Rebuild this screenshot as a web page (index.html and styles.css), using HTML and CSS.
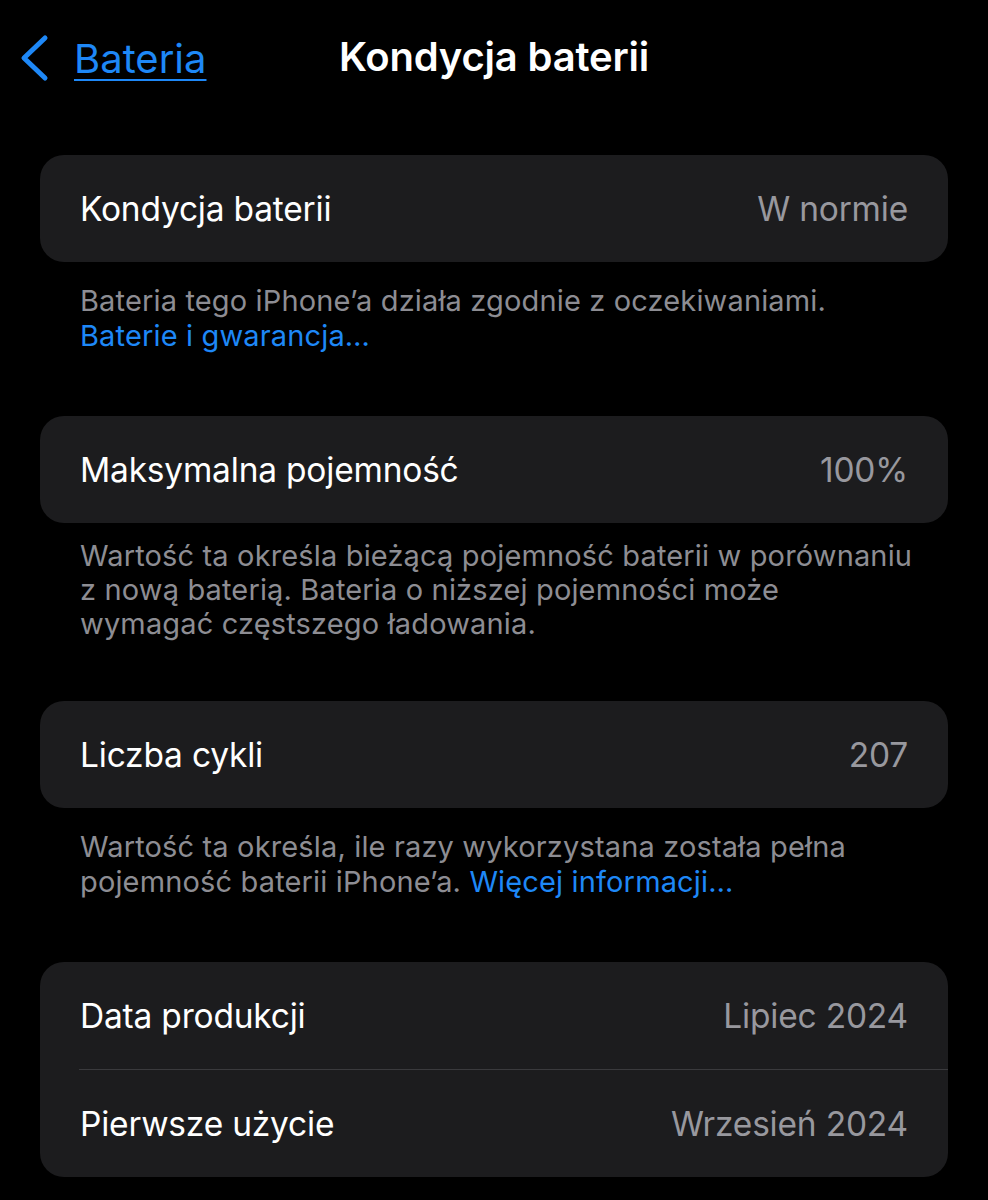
FILE: index.html
```html
<!DOCTYPE html>
<html lang="pl">
<head>
<meta charset="utf-8">
<title>Kondycja baterii</title>
<link rel="stylesheet" href="styles.css">
</head>
<body>
<div class="screen">
  <header class="nav">
    <a class="back" href="#">
      <svg class="chev" width="30" height="48" viewBox="0 0 30 48" aria-hidden="true">
        <polyline points="25,4 4,24 25,44" fill="none" stroke="currentColor" stroke-width="5" stroke-linecap="round" stroke-linejoin="round"/>
      </svg>
      <span class="back-label">Bateria</span>
    </a>
    <h1 class="title">Kondycja baterii</h1>
    <div class="nav-spacer"></div>
  </header>

  <main class="list">
    <section class="group">
      <div class="card">
        <div class="row"><span class="label">Kondycja baterii</span><span class="value">W normie</span></div>
      </div>
      <p class="footer">Bateria tego iPhone’a działa zgodnie z oczekiwaniami.<br><a class="link" href="#">Baterie i gwarancja…</a></p>
    </section>

    <section class="group">
      <div class="card">
        <div class="row"><span class="label">Maksymalna pojemność</span><span class="value">100%</span></div>
      </div>
      <p class="footer footer-tight">Wartość ta określa bieżącą pojemność baterii w porównaniu<br>z nową baterią. Bateria o niższej pojemności może<br>wymagać częstszego ładowania.</p>
    </section>

    <section class="group">
      <div class="card">
        <div class="row"><span class="label">Liczba cykli</span><span class="value">207</span></div>
      </div>
      <p class="footer">Wartość ta określa, ile razy wykorzystana została pełna<br>pojemność baterii iPhone’a. <a class="link" href="#">Więcej informacji…</a></p>
    </section>

    <section class="group">
      <div class="card">
        <div class="row"><span class="label">Data produkcji</span><span class="value">Lipiec 2024</span></div>
        <div class="divider"></div>
        <div class="row"><span class="label">Pierwsze użycie</span><span class="value">Wrzesień 2024</span></div>
      </div>
    </section>
  </main>
</div>
</body>
</html>
```

FILE: styles.css
```css
html, body {
  margin: 0;
  padding: 0;
  background: #000;
}

body {
  font-family: Inter, "Noto Sans", "Liberation Sans", sans-serif;
  color: #fff;
  -webkit-font-smoothing: antialiased;
}

.screen {
  width: 988px;
  min-height: 1200px;
  background: #000;
}

.nav {
  height: 116px;
  display: grid;
  grid-template-columns: 1fr auto 1fr;
  align-items: center;
}

.back {
  display: flex;
  align-items: center;
  gap: 24px;
  padding-left: 20px;
  color: #1e88f7;
  text-decoration: none;
  justify-self: start;
}

.chev {
  display: block;
}

.back-label {
  font-size: 40px;
  letter-spacing: 0;
  text-decoration: underline;
  text-decoration-thickness: 2px;
  text-underline-offset: 6px;
}

.title {
  margin: 0 0 4px 0;
  font-size: 40px;
  font-weight: 600;
  letter-spacing: -0.2px;
  color: #fff;
}

.list {
  padding: 39px 40px 0 40px;
}

.card {
  background: #1c1c1e;
  border-radius: 24px;
  overflow: hidden;
}

.row {
  height: 107px;
  display: flex;
  align-items: center;
  justify-content: space-between;
  padding: 0 40px;
  font-size: 33.5px;
  letter-spacing: -0.2px;
}

.label {
  color: #fff;
}

.value {
  color: #98989e;
}

.divider {
  height: 1px;
  background: #3a3a3d;
  margin-left: 39px;
}

.footer {
  margin: 0;
  padding: 21px 40px 63px 40px;
  font-size: 29px;
  line-height: 35px;
  letter-spacing: 0.15px;
  color: #8d8d93;
  white-space: nowrap;
}

.footer-tight {
  padding-top: 16px;
  line-height: 34px;
  padding-bottom: 60px;
}

.link {
  color: #1e88f7;
  text-decoration: none;
}
```
